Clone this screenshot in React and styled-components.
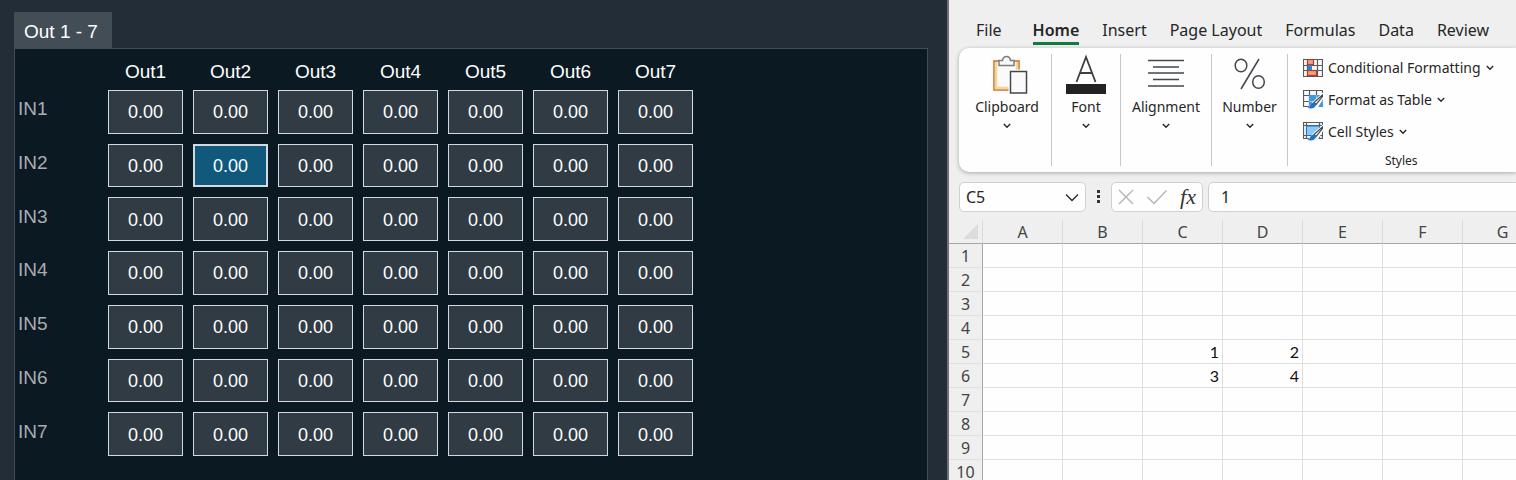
import React, { useState } from "react";
import styled, { createGlobalStyle } from "styled-components";

const GlobalStyle = createGlobalStyle`
  * {
    box-sizing: border-box;
  }

  body {
    margin: 0;
    background: #222d38;
  }

  button, input {
    font: inherit;
    color: inherit;
    margin: 0;
    padding: 0;
    border: 0;
    background: none;
    outline: none;
  }
`;

const Page = styled.div`
  display: grid;
  grid-template-columns: 949fr 567fr;
  height: 100vh;
  overflow: hidden;
`;

/* mixer */

const Mixer = styled.section`
  display: flex;
  flex-direction: column;
  align-items: flex-start;
  min-width: 0;
  padding: 12px 19px 0 14px;
  border-right: 2px solid #6f7172;
  background: #222d38;
  color: #fff;
  font-family: "Liberation Sans", Arial, sans-serif;
  font-size: 19px;
`;

const MixerTab = styled.button`
  height: 36px;
  padding: 4px 14px 0 10px;
  background: #434d56;
  line-height: 32px;
`;

const MixerPanel = styled.div`
  flex: 1;
  align-self: stretch;
  border: 1px solid #434d56;
  border-bottom: 0;
  background: #0b1923;
`;

const Matrix = styled.table`
  height: 417px;
  margin-left: -7px;
  border-collapse: separate;
  border-spacing: 10px;
`;

const OutHead = styled.th`
  width: 75px;
  height: 21px;
  padding: 4px 0 0;
  font-weight: normal;
  line-height: 17px;
`;

const InHead = styled.th`
  width: 80px;
  padding: 0 0 5px;
  color: #a9adb2;
  font-weight: normal;
  text-align: left;
`;

const GainCell = styled.td`
  padding: 0;
  border: 1px solid #d4d9dd;
  background: ${(props) => (props.$active ? "#10597d" : "#303b43")};
  box-shadow: ${(props) => (props.$active ? "inset 0 0 0 1px #d4d9dd" : "none")};
`;

const GainInput = styled.input`
  display: block;
  width: 100%;
  height: 32px;
  padding-top: 2px;
  font-size: 18px;
  text-align: center;
`;

/* spreadsheet */

const Sheet = styled.section`
  display: flex;
  flex-direction: column;
  min-width: 0;
  overflow: hidden;
  background: #efefef;
  color: #262626;
  font-family: "Noto Sans", "Open Sans", sans-serif;
  font-size: 14px;
`;

const Menu = styled.nav`
  display: flex;
  gap: 23px;
  padding: 17px 0 0 27px;
  font-size: 16px;
`;

const MenuItem = styled.button`
  flex: none;
  height: 28px;
  border-bottom: 3px solid ${(props) => (props.$active ? "#107c41" : "transparent")};
  font-weight: ${(props) => (props.$active ? 600 : 400)};
  line-height: 24px;

  &:first-child {
    margin-right: 8px;
  }
`;

const Ribbon = styled.div`
  display: flex;
  flex: none;
  height: 124px;
  margin: 3px 0 0 10px;
  padding: 6px 0;
  border-radius: 10px 0 0 10px;
  background: #fefefe;
  box-shadow: 0 1px 4px rgba(0, 0, 0, 0.3);
`;

const Group = styled.button`
  display: flex;
  flex: none;
  flex-direction: column;
  align-items: center;
  width: ${(props) => props.$width}px;
  border-right: 1px solid #c8c8c8;
  line-height: 20px;

  &:first-child {
    padding-left: 4px;
  }

  svg {
    flex: none;
  }
`;

const GroupLabel = styled.span`
  height: 28px;
  padding-top: 3px;
`;

const StylesGroup = styled.div`
  display: flex;
  flex-direction: column;
  align-items: flex-start;
  padding-left: 15px;
`;

const StyleButton = styled.button`
  display: flex;
  flex: none;
  align-items: center;
  gap: 5px;
  height: 32px;
  padding-bottom: 5px;
  white-space: nowrap;
`;

const StylesCaption = styled.span`
  align-self: center;
  padding-left: 6px;
  font-size: 12px;
  line-height: 22px;
`;

const FormulaBar = styled.div`
  display: flex;
  flex: none;
  gap: 5px;
  margin: 10px -6px 0 0;
  padding-left: 10px;
`;

const Box = styled.div`
  display: flex;
  flex: ${(props) => (props.$width ? "none" : "1")};
  align-items: center;
  justify-content: space-between;
  width: ${(props) => (props.$width ? `${props.$width}px` : "auto")};
  height: 30px;
  padding: 0 6px;
  border: 1px solid #d0d0d0;
  border-radius: 5px;
  background: #fefefe;
`;

const BoxInput = styled.input`
  flex: 1;
  min-width: 0;
  font-size: 16px;
  padding-left: ${(props) => props.$indent || 0}px;
`;

const FxLabel = styled.i`
  color: #333;
  font-family: "Liberation Serif", serif;
  font-size: 22px;
  line-height: 24px;
`;

const Dots = styled.svg`
  align-self: center;
  margin: 0 5px 0 6px;
`;

const Grid = styled.table`
  width: 594px;
  margin-top: 8px;
  border-collapse: separate;
  border-spacing: 0;
  table-layout: fixed;
  font-size: 16px;
  line-height: 21px;
`;

const Corner = styled.th`
  width: 34px;
  height: 24px;
  padding: 0;
  border-right: 1px solid #dadada;
  border-bottom: 1px solid #a6a6a6;

  svg {
    display: block;
    margin-left: 14px;
  }
`;

const ColHead = styled.th`
  width: 80px;
  padding: 2px 0 0;
  border-right: 1px solid #dadada;
  border-bottom: 1px solid #a6a6a6;
  color: #444;
  font-weight: normal;
`;

const RowHead = styled.th`
  height: 24px;
  padding: 2px 0 0;
  border-right: 1px solid #a6a6a6;
  border-bottom: 1px solid #e0e0e0;
  color: #444;
  font-weight: normal;
`;

const Cell = styled.td`
  padding: 0 3px 0 0;
  border-right: 1px solid #e0e0e0;
  border-bottom: 1px solid #e0e0e0;
  background: #fefefe;
  color: #111;
  font-family: Lato, sans-serif;
  text-align: right;
`;

const Chevron = () => (
  <svg width="8" height="8" viewBox="0 0 8 8" fill="none" stroke="#262626" strokeWidth="1.4">
    <path d="M0.8 2 4 5.2 7.2 2" />
  </svg>
);

const DropChevron = () => (
  <svg width="14" height="14" viewBox="0 0 14 14" fill="none" stroke="#262626" strokeWidth="1.3">
    <path d="M1 4.500 7 10.500 13 4.500" />
  </svg>
);

const ClipboardIcon = () => (
  <svg width="41" height="40" viewBox="-5 0 41 40">
    <rect x="2" y="7" width="25" height="29" fill="#fafafa" stroke="#d0752f" strokeWidth="1.600" />
    <path d="M4 8V34H17M25 8V16" fill="none" stroke="#f5d595" strokeWidth="2.500" />
    <path d="M7 11.500V6.500H10.500Q11 2.500 14.500 2.500T18.500 6.500H22V11.500Z" fill="#fafafa" stroke="#7b7e81" strokeWidth="1.500" />
    <rect x="16.500" y="15.500" width="19.500" height="24" fill="#fefefe" />
    <rect x="18.500" y="17.500" width="16" height="21.500" fill="#fafafa" stroke="#42474c" strokeWidth="1.500" />
  </svg>
);

const FontIcon = () => (
  <svg width="40" height="40" viewBox="0 0 40 40">
    <path d="M10.500 28 20 3 29.500 28M14 19H26" fill="none" stroke="#3b3e42" strokeWidth="1.800" />
    <rect y="30" width="40" height="10" fill="#222" />
  </svg>
);

const AlignIcon = () => (
  <svg width="36" height="40" viewBox="0 0 36 40" stroke="#42474c" strokeWidth="1.500">
    <path d="M0 6.500H36M5 13H31M0 19H36M5 25.500H31M0 32H36" />
  </svg>
);

const PercentIcon = () => (
  <svg width="32" height="40" viewBox="0 0 32 40" fill="none" stroke="#42474c" strokeWidth="1.500">
    <ellipse cx="7" cy="11.500" rx="5.800" ry="6.300" />
    <ellipse cx="24.500" cy="28" rx="5.800" ry="6.300" />
    <path d="M25 5 7 35" />
  </svg>
);

const ConditionalIcon = () => (
  <svg width="20" height="18" viewBox="0 0 20 18">
    <path d="M0.500 0.500H19.500V17.500H0.500ZM4.500 0V18M14.500 0V18M0 6.500H20M0 11.500H20" fill="#fafafa" stroke="#565a5e" strokeWidth="1.200" />
    <rect x="5" y="6" width="4" height="6" fill="#2b88d8" />
    <rect x="4.500" y="0.500" width="6" height="5" fill="#f0a080" stroke="#b93a25" strokeWidth="1.200" />
    <rect x="4.500" y="11.500" width="9" height="5" fill="#f0a080" stroke="#b93a25" strokeWidth="1.200" />
  </svg>
);

const Brush = () => (
  <g>
    <path d="M20 2.500 9.500 12 4 19H14L20 9Z" fill="#fefefe" />
    <path d="M19.500 5 11 12.500 13 14.500 19.800 6Z" fill="#fefefe" stroke="#42474c" strokeWidth="1.200" />
    <path d="M10.500 12.500Q7.500 13 7 15.500 6.500 17.500 4 18 11.500 19.800 13 15Z" fill="#1e74c4" />
  </g>
);

const TableIcon = () => (
  <svg width="20" height="19" viewBox="0 0 20 19">
    <path d="M0.500 0.500H19.500V16.500H0.500ZM6.500 0V17M13.500 0V17M0 5.500H20M0 11.500H20" fill="#fafafa" stroke="#565a5e" strokeWidth="1.200" />
    <path d="M6 5H20V17H6Z" fill="#3f99e2" />
    <path d="M6 11.500H20M13.500 5V17" stroke="#8ec8f4" />
    <Brush />
  </svg>
);

const CellStylesIcon = () => (
  <svg width="20" height="19" viewBox="0 0 20 19">
    <path d="M0.500 0.500H19.500V16.500H0.500ZM3.500 0V17M16.500 0V17M0 3.500H20M0 13.500H20" fill="#fafafa" stroke="#565a5e" strokeWidth="1.200" />
    <rect x="3.500" y="4" width="13" height="9.500" fill="#8ec8f4" stroke="#1e74c4" />
    <Brush />
  </svg>
);

const OUTS = [1, 2, 3, 4, 5, 6, 7];
const INS = [1, 2, 3, 4, 5, 6, 7];

const MENU = ["File", "Home", "Insert", "Page Layout", "Formulas", "Data", "Review"];

const GROUPS = [
  { label: "Clipboard", width: 93, Icon: ClipboardIcon },
  { label: "Font", width: 69, Icon: FontIcon },
  { label: "Alignment", width: 91, Icon: AlignIcon },
  { label: "Number", width: 76, Icon: PercentIcon },
];

const STYLES = [
  { label: "Conditional Formatting", Icon: ConditionalIcon },
  { label: "Format as Table", Icon: TableIcon },
  { label: "Cell Styles", Icon: CellStylesIcon },
];

const COLS = ["A", "B", "C", "D", "E", "F", "G"];
const ROWS = [1, 2, 3, 4, 5, 6, 7, 8, 9, 10];
const VALUES = { C5: 1, D5: 2, C6: 3, D6: 4 };

const MixerMatrix = () => {
  const [active, setActive] = useState("2-2");

  return (
    <Mixer>
      <MixerTab>Out 1 - 7</MixerTab>
      <MixerPanel>
        <Matrix>
          <thead>
            <tr>
              <td />
              {OUTS.map((out) => (
                <OutHead key={out} scope="col">Out{out}</OutHead>
              ))}
            </tr>
          </thead>
          <tbody>
            {INS.map((row) => (
              <tr key={row}>
                <InHead scope="row">IN{row}</InHead>
                {OUTS.map((out) => (
                  <GainCell key={out} $active={active === `${row}-${out}`}>
                    <GainInput
                      aria-label={`IN${row} to Out${out}`}
                      defaultValue="0.00"
                      onFocus={() => setActive(`${row}-${out}`)}
                    />
                  </GainCell>
                ))}
              </tr>
            ))}
          </tbody>
        </Matrix>
      </MixerPanel>
    </Mixer>
  );
};

const Spreadsheet = () => (
  <Sheet>
    <Menu>
      {MENU.map((item) => (
        <MenuItem key={item} $active={item === "Home"}>{item}</MenuItem>
      ))}
    </Menu>
    <Ribbon>
      {GROUPS.map(({ label, width, Icon }) => (
        <Group key={label} $width={width}>
          <Icon />
          <GroupLabel>{label}</GroupLabel>
          <Chevron />
        </Group>
      ))}
      <StylesGroup>
        {STYLES.map(({ label, Icon }) => (
          <StyleButton key={label}>
            <Icon />
            {label}
            <Chevron />
          </StyleButton>
        ))}
        <StylesCaption>Styles</StylesCaption>
      </StylesGroup>
    </Ribbon>
    <FormulaBar>
      <Box $width={127}>
        <BoxInput aria-label="Name box" defaultValue="C5" />
        <DropChevron />
      </Box>
      <Dots width="4" height="14" viewBox="0 0 4 14" fill="#333">
        <path d="M0 0H3V3H0ZM0 5H3V8H0ZM0 10H3V13H0Z" />
      </Dots>
      <Box $width={92}>
        <svg width="16" height="16" viewBox="0 0 16 16" stroke="#b0b2b4" strokeWidth="1.300">
          <path d="M1 1 15 15M15 1 1 15" />
        </svg>
        <svg width="20" height="16" viewBox="0 0 20 16" fill="none" stroke="#b0b2b4" strokeWidth="1.300">
          <path d="M0.500 8 7 14.500 19.500 1.500" />
        </svg>
        <FxLabel>fx</FxLabel>
      </Box>
      <Box>
        <BoxInput aria-label="Formula" defaultValue="1" $indent={6} />
      </Box>
    </FormulaBar>
    <Grid>
      <thead>
        <tr>
          <Corner>
            <svg width="16" height="16" viewBox="0 0 16 16" fill="#dcdcdc">
              <path d="M15 0V15H0Z" />
            </svg>
          </Corner>
          {COLS.map((col) => (
            <ColHead key={col} scope="col">{col}</ColHead>
          ))}
        </tr>
      </thead>
      <tbody>
        {ROWS.map((row) => (
          <tr key={row}>
            <RowHead scope="row">{row}</RowHead>
            {COLS.map((col) => (
              <Cell key={col}>{VALUES[`${col}${row}`]}</Cell>
            ))}
          </tr>
        ))}
      </tbody>
    </Grid>
  </Sheet>
);

const App = () => (
  <>
    <GlobalStyle />
    <Page>
      <MixerMatrix />
      <Spreadsheet />
    </Page>
  </>
);

export default App;
